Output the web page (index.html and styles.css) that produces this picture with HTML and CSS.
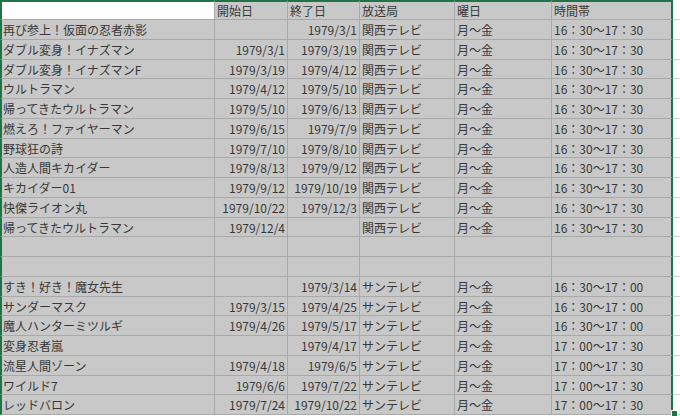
FILE: index.html
```html
<!DOCTYPE html>
<html lang="ja">
<head>
<meta charset="utf-8">
<link rel="stylesheet" href="styles.css">
</head>
<body>
<div class="sheet">
  <div class="c a hd white"></div><div class="c hd">開始日</div><div class="c hd">終了日</div><div class="c hd">放送局</div><div class="c hd">曜日</div><div class="c f hd">時間帯</div><div class="g"></div>

  <div class="c a">再び参上！仮面の忍者赤影</div><div class="c n"></div><div class="c n">1979/3/1</div><div class="c">関西テレビ</div><div class="c">月～金</div><div class="c f">16：30～17：30</div><div class="g"></div>
  <div class="c a">ダブル変身！イナズマン</div><div class="c n">1979/3/1</div><div class="c n">1979/3/19</div><div class="c">関西テレビ</div><div class="c">月～金</div><div class="c f">16：30～17：30</div><div class="g"></div>
  <div class="c a">ダブル変身！イナズマンF</div><div class="c n">1979/3/19</div><div class="c n">1979/4/12</div><div class="c">関西テレビ</div><div class="c">月～金</div><div class="c f">16：30～17：30</div><div class="g"></div>
  <div class="c a">ウルトラマン</div><div class="c n">1979/4/12</div><div class="c n">1979/5/10</div><div class="c">関西テレビ</div><div class="c">月～金</div><div class="c f">16：30～17：30</div><div class="g"></div>
  <div class="c a">帰ってきたウルトラマン</div><div class="c n">1979/5/10</div><div class="c n">1979/6/13</div><div class="c">関西テレビ</div><div class="c">月～金</div><div class="c f">16：30～17：30</div><div class="g"></div>
  <div class="c a">燃えろ！ファイヤーマン</div><div class="c n">1979/6/15</div><div class="c n">1979/7/9</div><div class="c">関西テレビ</div><div class="c">月～金</div><div class="c f">16：30～17：30</div><div class="g"></div>
  <div class="c a">野球狂の詩</div><div class="c n">1979/7/10</div><div class="c n">1979/8/10</div><div class="c">関西テレビ</div><div class="c">月～金</div><div class="c f">16：30～17：30</div><div class="g"></div>
  <div class="c a">人造人間キカイダー</div><div class="c n">1979/8/13</div><div class="c n">1979/9/12</div><div class="c">関西テレビ</div><div class="c">月～金</div><div class="c f">16：30～17：30</div><div class="g"></div>
  <div class="c a">キカイダー01</div><div class="c n">1979/9/12</div><div class="c n">1979/10/19</div><div class="c">関西テレビ</div><div class="c">月～金</div><div class="c f">16：30～17：30</div><div class="g"></div>
  <div class="c a">快傑ライオン丸</div><div class="c n">1979/10/22</div><div class="c n">1979/12/3</div><div class="c">関西テレビ</div><div class="c">月～金</div><div class="c f">16：30～17：30</div><div class="g"></div>
  <div class="c a">帰ってきたウルトラマン</div><div class="c n">1979/12/4</div><div class="c n"></div><div class="c">関西テレビ</div><div class="c">月～金</div><div class="c f">16：30～17：30</div><div class="g"></div>
  <div class="c a"></div><div class="c n"></div><div class="c n"></div><div class="c"></div><div class="c"></div><div class="c f"></div><div class="g"></div>
  <div class="c a"></div><div class="c n"></div><div class="c n"></div><div class="c"></div><div class="c"></div><div class="c f"></div><div class="g"></div>
  <div class="c a">すき！好き！魔女先生</div><div class="c n"></div><div class="c n">1979/3/14</div><div class="c">サンテレビ</div><div class="c">月～金</div><div class="c f">16：30～17：00</div><div class="g"></div>
  <div class="c a">サンダーマスク</div><div class="c n">1979/3/15</div><div class="c n">1979/4/25</div><div class="c">サンテレビ</div><div class="c">月～金</div><div class="c f">16：30～17：00</div><div class="g"></div>
  <div class="c a">魔人ハンターミツルギ</div><div class="c n">1979/4/26</div><div class="c n">1979/5/17</div><div class="c">サンテレビ</div><div class="c">月～金</div><div class="c f">16：30～17：00</div><div class="g"></div>
  <div class="c a">変身忍者嵐</div><div class="c n"></div><div class="c n">1979/4/17</div><div class="c">サンテレビ</div><div class="c">月～金</div><div class="c f">17：00～17：30</div><div class="g"></div>
  <div class="c a">流星人間ゾーン</div><div class="c n">1979/4/18</div><div class="c n">1979/6/5</div><div class="c">サンテレビ</div><div class="c">月～金</div><div class="c f">17：00～17：30</div><div class="g"></div>
  <div class="c a">ワイルド7</div><div class="c n">1979/6/6</div><div class="c n">1979/7/22</div><div class="c">サンテレビ</div><div class="c">月～金</div><div class="c f">17：00～17：30</div><div class="g"></div>
  <div class="c a">レッドバロン</div><div class="c n">1979/7/24</div><div class="c n">1979/10/22</div><div class="c">サンテレビ</div><div class="c">月～金</div><div class="c f">17：00～17：30</div><div class="g"></div>
  <div class="handle"></div>
</div>
</body>
</html>
```

FILE: styles.css
```css
html, body {
  margin: 0;
  padding: 0;
  background: #ffffff;
}
body {
  width: 680px;
  height: 416px;
  overflow: hidden;
  font-family: "Noto Sans CJK JP", "Noto Sans", sans-serif;
  font-size: 12px;
  color: #383838;
}
.sheet {
  position: relative;
  display: grid;
  grid-template-columns: 215px 73px 72px 95px 97px 121px 7px;
  grid-template-rows: 20px repeat(20, 19.75px);
}
.c {
  box-sizing: border-box;
  background: #c8c8c8;
  border-right: 1px solid #a9a9a9;
  border-bottom: 1px solid #a9a9a9;
  padding: 0 2px;
  line-height: 19px;
  white-space: nowrap;
  overflow: hidden;
}
.c.a {
  border-left: 2px solid #217346;
  padding-left: 1px;
}
.c.n {
  text-align: right;
}
.c.f {
  border-right: 2px solid #217346;
}
.c.hd {
  border-top: 2px solid #217346;
  line-height: 17px;
}
.c.white {
  background: #ffffff;
}
.g {
  box-sizing: border-box;
  background: #ffffff;
  border-bottom: 1px solid #d4d4d4;
}
.handle {
  position: absolute;
  left: 671px;
  top: 410px;
  width: 5px;
  height: 5px;
  background: #217346;
  border: 1px solid #ffffff;
}
```
